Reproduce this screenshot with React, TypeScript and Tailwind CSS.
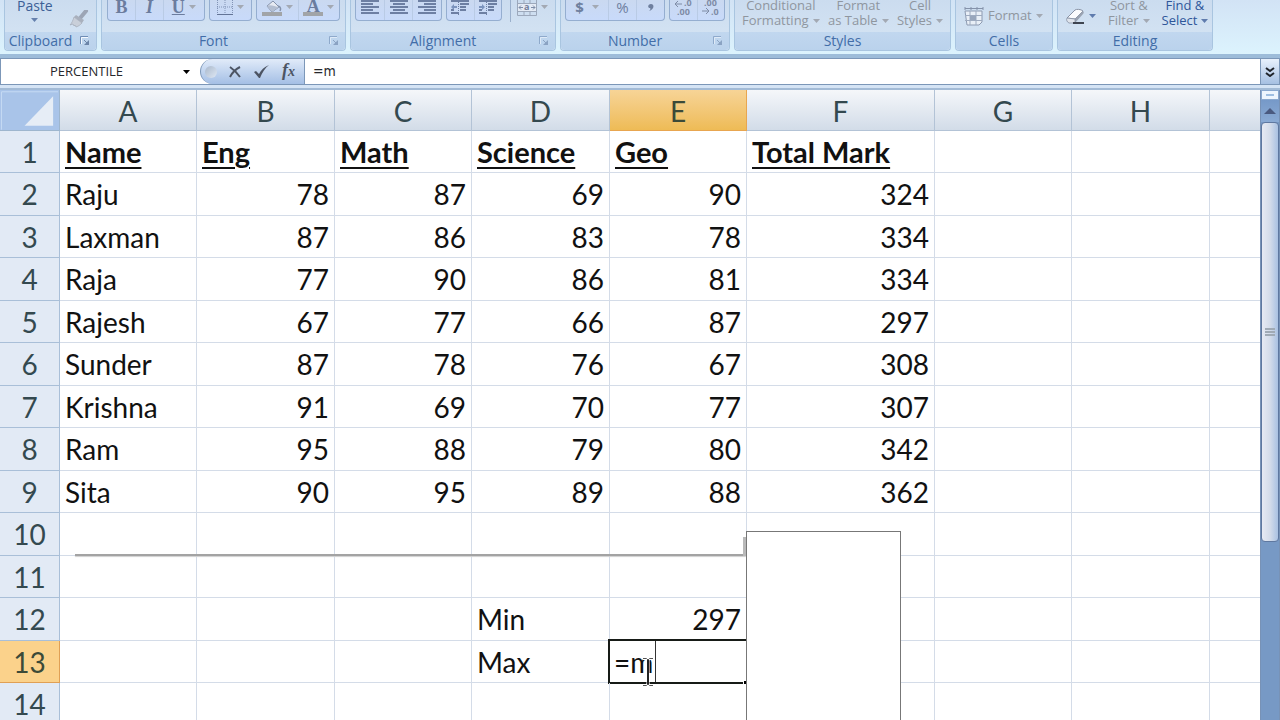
import { useState } from "react";
import type { ReactNode } from "react";

type Align = "left" | "right";

const columns = [
  { id: "A", width: "w-[137px]" },
  { id: "B", width: "w-[138px]" },
  { id: "C", width: "w-[137px]" },
  { id: "D", width: "w-[138px]" },
  { id: "E", width: "w-[137px]" },
  { id: "F", width: "w-[188px]" },
  { id: "G", width: "w-[137px]" },
  { id: "H", width: "w-[138px]" },
];

const rows: string[][] = [
  ["Name", "Eng", "Math", "Science", "Geo", "Total Mark"],
  ["Raju", "78", "87", "69", "90", "324"],
  ["Laxman", "87", "86", "83", "78", "334"],
  ["Raja", "77", "90", "86", "81", "334"],
  ["Rajesh", "67", "77", "66", "87", "297"],
  ["Sunder", "87", "78", "76", "67", "308"],
  ["Krishna", "91", "69", "70", "77", "307"],
  ["Ram", "95", "88", "79", "80", "342"],
  ["Sita", "90", "95", "89", "88", "362"],
  [],
  [],
  ["", "", "", "Min", "297"],
  ["", "", "", "Max", ""],
  [],
];

const ACTIVE_ROW = 12;
const ACTIVE_COL = 4;

function alignOf(value: string): Align {
  return /^\d+$/.test(value) ? "right" : "left";
}

function Caret({ className = "text-[#a3a9b3]" }: { className?: string }) {
  return (
    <svg viewBox="0 0 7 4" className={`inline-block h-1 w-[7px] shrink-0 ${className}`} aria-hidden="true">
      <path d="M0 0h7L3.5 4z" fill="currentColor" />
    </svg>
  );
}

function Launcher({ dim = false }: { dim?: boolean }) {
  return (
    <svg viewBox="0 0 10 10" className={`h-[10px] w-[10px] ${dim ? "opacity-60" : ""}`} aria-hidden="true">
      <path d="M.5 8V.5H8" fill="none" stroke="#6f8db5" />
      <path d="M1.500 8V1.500H8" fill="none" stroke="#f4f9ff" />
      <path d="M4 4l3 3" stroke="#6b84a8" />
      <path d="M9 4v5H4z" fill="#6b84a8" />
    </svg>
  );
}

function Group({
  label,
  className,
  launcher,
  children,
}: {
  label: string;
  className: string;
  launcher?: "on" | "dim";
  children: ReactNode;
}) {
  return (
    <section
      aria-label={label}
      className={`flex shrink-0 flex-col rounded-b border border-t-0 border-[#a9c5e0] bg-gradient-to-b from-[#cbdcef] to-[#d6e5f4] ${className}`}
    >
      <div className="flex h-8 items-start">{children}</div>
      <div className="flex h-[18px] items-center rounded-b bg-gradient-to-b from-[#c1d7ef] to-[#bad2ec] text-[14px] leading-none text-[#426da8]">
        <span className="flex-1 text-center">{label}</span>
        {launcher && (
          <button type="button" aria-label={`${label} options`} className="ml-1 mr-[6px] shrink-0">
            <Launcher dim={launcher === "dim"} />
          </button>
        )}
      </div>
    </section>
  );
}

function ToolSet({ className, children }: { className: string; children: ReactNode }) {
  return (
    <div
      className={`flex h-[21px] items-stretch divide-x divide-[#b9cbe5] rounded-b-sm border border-t-0 border-[#95aed0] bg-gradient-to-b from-[#cad9f0] to-[#c8dafa] ${className}`}
    >
      {children}
    </div>
  );
}

function Tool({
  label,
  className = "flex-1",
  children,
}: {
  label: string;
  className?: string;
  children: ReactNode;
}) {
  return (
    <button type="button" aria-label={label} className={`flex items-start justify-center gap-1 ${className}`}>
      {children}
    </button>
  );
}

function MenuCaret() {
  return (
    <span className="flex h-[14px] items-center">
      <Caret />
    </span>
  );
}

function Lines({ rights, lefts }: { rights: number[]; lefts: number[] }) {
  return (
    <svg viewBox="0 0 18 15" className="h-[15px] w-[18px]" aria-hidden="true">
      {rights.map((right, index) => (
        <path key={index} d={`M${lefts[index]} ${index * 3 + 1}H${right}`} stroke="#6d7fa3" strokeWidth="2" />
      ))}
    </svg>
  );
}

function Indent({ flip = false }: { flip?: boolean }) {
  return (
    <svg viewBox="0 0 20 16" className="h-4 w-5" aria-hidden="true">
      <path d="M1 1h18M10 4h9M10 7h6M1 10h3M10 10h6M1 13h8" stroke="#6d7fa3" strokeWidth="2" />
      <path d="M8.500 2v14" stroke="#6d7fa3" strokeDasharray="1 1" />
      <path d={flip ? "M1 6h3V4l3 3-3 3V8H1z" : "M7 6H4V4L1 7l3 3V8h3z"} fill="#7b93bd" />
    </svg>
  );
}

function TwoLine({
  first,
  second,
  className = "text-[#8f969f]",
  caret,
}: {
  first: string;
  second: string;
  className?: string;
  caret?: string;
}) {
  return (
    <button type="button" className={`flex flex-col items-center text-[13px] leading-[15px] ${className}`}>
      <span>{first}</span>
      <span className="flex items-center gap-1 whitespace-nowrap">
        {second}
        <Caret className={caret} />
      </span>
    </button>
  );
}

function Ribbon() {
  return (
    <header className="flex h-[58px] shrink-0 items-start gap-1 overflow-hidden border-b-4 border-[#9dbcd9] bg-gradient-to-b from-[#d2e3f5] to-[#dcf3fd] pl-1 font-['Open_Sans','Noto_Sans',sans-serif]">
      <Group label="Clipboard" className="w-[93px]" launcher="on">
        <div className="flex h-7 w-full items-end">
          <button type="button" className="ml-3 flex flex-col items-center gap-1 pb-[6px] text-[14px] leading-4 text-[#3c5f96]">
            Paste
            <Caret className="text-[#6580ad]" />
          </button>
          <button type="button" aria-label="Format Painter" className="ml-4">
            <svg viewBox="0 0 20 18" className="h-[18px] w-5" aria-hidden="true">
              <path d="M17 1l-5 6" stroke="#9ca5b5" strokeWidth="4" strokeLinecap="round" />
              <path d="M7 5l8 5-2 3-8-6z" fill="#a9b0bd" />
              <path d="M5 7l8 6c-2 2-3 3-6 4l-1-2-1 1-1-2-3 1C3 13 4 10 5 7z" fill="#c9cfd9" stroke="#a3abb8" strokeWidth=".7" />
            </svg>
          </button>
        </div>
      </Group>

      <Group label="Font" className="w-[245px]" launcher="dim">
        <div className="flex w-full gap-1 px-[5px] font-['Liberation_Serif',serif] text-[18px] leading-[15px] text-[#6b7c9e]">
          <ToolSet className="w-[98px]">
            <Tool label="Bold" className="w-7"><b>B</b></Tool>
            <Tool label="Italic" className="w-7"><i className="font-bold">I</i></Tool>
            <Tool label="Underline" className="flex-1">
              <span className="font-bold underline">U</span>
              <MenuCaret />
            </Tool>
          </ToolSet>
          <ToolSet className="w-[44px]">
            <Tool label="Borders">
              <svg viewBox="0 0 16 15" className="h-[15px] w-4" aria-hidden="true">
                <path d="M.5 0v14M8 0v14M15.500 0v14M0 7h16" stroke="#8193b5" strokeDasharray="1 1" />
                <path d="M0 14.500h16" stroke="#637496" />
              </svg>
              <MenuCaret />
            </Tool>
          </ToolSet>
          <ToolSet className="w-[84px]">
            <Tool label="Fill Color">
              <svg viewBox="0 0 20 17" className="h-[17px] w-5" aria-hidden="true">
                <path d="M5 6l6-5 6 6-7 5z" fill="#e6eaf2" stroke="#8492ab" />
                <path d="M5 6c3-2 8 1 12 1l-7 5z" fill="#b3bed1" />
                <path d="M16 6c3 1 3 3 2 5" fill="none" stroke="#8492ab" strokeWidth="1.500" />
                <path d="M0 12h20v4H0z" fill="#a1a4a8" />
              </svg>
              <MenuCaret />
            </Tool>
            <Tool label="Font Color">
              <span className="flex w-5 flex-col items-center border-b-4 border-[#a1a4a8] font-bold leading-3">A</span>
              <MenuCaret />
            </Tool>
          </ToolSet>
        </div>
      </Group>

      <Group label="Alignment" className="w-[206px]" launcher="dim">
        <div className="flex w-full gap-1 px-1">
          <ToolSet className="w-[87px]">
            <Tool label="Align Left"><Lines lefts={[0, 0, 0, 0, 0]} rights={[18, 12, 18, 12, 18]} /></Tool>
            <Tool label="Center"><Lines lefts={[0, 3, 0, 3, 0]} rights={[18, 15, 18, 15, 18]} /></Tool>
            <Tool label="Align Right"><Lines lefts={[0, 6, 0, 6, 0]} rights={[18, 18, 18, 18, 18]} /></Tool>
          </ToolSet>
          <ToolSet className="w-[56px]">
            <Tool label="Decrease Indent"><Indent /></Tool>
            <Tool label="Increase Indent"><Indent flip /></Tool>
          </ToolSet>
          <div className="ml-1 flex h-[22px] flex-1 border-l border-[#9bb0cc]">
            <Tool label="Merge and Center" className="ml-[6px]">
              <svg viewBox="0 0 20 16" className="h-4 w-5" aria-hidden="true">
                <path d="M.5 0v15.500h19V0M0 3.500h20M0 11.500h20M7 0v3.500M13 0v3.500M7 11.500v4M13 11.500v4" fill="none" stroke="#9ca8bb" />
                <path d="M1 4h18v7H1z" fill="#e4ebf5" />
                <path d="M2 7.500h4M14 7.500h4M4 5.500l-2 2 2 2M16 5.500l2 2-2 2" fill="none" stroke="#7e8da8" />
                <text x="7" y="10" fontSize="9" fontWeight="bold" fill="#72809b">a</text>
              </svg>
              <MenuCaret />
            </Tool>
          </div>
        </div>
      </Group>

      <Group label="Number" className="w-[170px]" launcher="dim">
        <div className="flex w-full gap-1 px-1 text-[15px] leading-[15px] text-[#6f809f]">
          <ToolSet className="w-[100px]">
            <Tool label="Accounting Format" className="w-[43px]">
              <b>$</b>
              <span className="ml-1"><MenuCaret /></span>
            </Tool>
            <Tool label="Percent Style">%</Tool>
            <Tool label="Comma Style">
              <svg viewBox="0 0 6 14" className="h-[14px] w-[6px]" aria-hidden="true">
                <path d="M3 4c4 0 3 6-2 7 1-1 2-2 1-3C-1 8 0 4 3 4z" fill="#6f809f" />
              </svg>
            </Tool>
          </ToolSet>
          <ToolSet className="w-[56px]">
            <Tool label="Increase Decimal">
              <svg viewBox="0 0 19 16" className="h-4 w-[19px]" fontSize="9" fontWeight="bold" fill="#7f8ca6" aria-hidden="true">
                <path d="M1 4h7M4 1L1 4l3 3" fill="none" stroke="#7f8ca6" />
                <text x="10" y="6">.0</text>
                <text x="3" y="15">.00</text>
              </svg>
            </Tool>
            <Tool label="Decrease Decimal">
              <svg viewBox="0 0 19 16" className="h-4 w-[19px]" fontSize="9" fontWeight="bold" fill="#7f8ca6" aria-hidden="true">
                <text x="3" y="6">.00</text>
                <path d="M1 11h7M5 8l3 3-3 3" fill="none" stroke="#7f8ca6" />
                <text x="10" y="15">.0</text>
              </svg>
            </Tool>
          </ToolSet>
        </div>
      </Group>

      <Group label="Styles" className="w-[217px]">
        <div className="flex h-7 w-full items-end justify-between px-[7px]">
          <TwoLine first="Conditional" second="Formatting" />
          <TwoLine first="Format" second="as Table" />
          <TwoLine first="Cell" second="Styles" />
        </div>
      </Group>

      <Group label="Cells" className="w-[98px]">
        <button type="button" className="flex h-8 w-full items-center gap-1 px-2 text-[13px] text-[#8f969f]">
          <svg viewBox="0 0 20 20" className="h-5 w-5 shrink-0" aria-hidden="true">
            <path d="M1 1v3M7 1v3M13 1v3M19 1v3M1 2.500h18" stroke="#8492aa" />
            <path d="M1 5h17v11l-3 3H3z" fill="#e9eff7" stroke="#8d9ab1" />
            <path d="M6 5v14M12 5v14M1 9.500h17M1 14.500h17" stroke="#9eabc0" />
            <path d="M6 10h6v4H6z" fill="#98a6bc" />
          </svg>
          Format
          <Caret />
        </button>
      </Group>

      <Group label="Editing" className="w-[156px]">
        <div className="flex h-7 w-full items-end gap-3 pl-2">
          <button type="button" aria-label="Clear" className="flex items-center gap-1 pb-1">
            <svg viewBox="0 0 19 16" className="h-4 w-[19px]" aria-hidden="true">
              <path d="M1 10l8-8c1-1 6-1 8 1l-8 8z" fill="#fbfcfe" stroke="#8892a5" />
              <path d="M9 11l8-8c1 1 1 2 0 3l-8 9z" fill="#9aa3b2" />
              <path d="M1 10l8 1v4H3c-2-1-3-3-2-5z" fill="#dfe4ec" stroke="#8892a5" strokeWidth=".8" />
              <path d="M7 15h11" stroke="#3e4450" strokeWidth="2" />
            </svg>
            <Caret className="text-[#5f7bad]" />
          </button>
          <TwoLine first="Sort &" second="Filter" />
          <TwoLine first="Find &" second="Select" className="text-[#2f569a]" caret="text-[#5f7bad]" />
        </div>
      </Group>
    </header>
  );
}

function FormulaBar({ value, onChange }: { value: string; onChange: (value: string) => void }) {
  return (
    <div className="flex h-[27px] shrink-0 items-stretch border-y border-[#7c97b8] bg-white font-['DejaVu_Sans_Condensed','DejaVu_Sans',sans-serif] text-[13px] text-[#26282c]">
      <div className="flex w-[200px] shrink-0 border-l border-[#7c97b8]">
        <input
          aria-label="Name Box"
          defaultValue="PERCENTILE"
          className="min-w-0 flex-1 text-center font-['Open_Sans','Noto_Sans',sans-serif] outline-none"
        />
        <button type="button" aria-label="Name list" className="flex w-7 items-center justify-center">
          <Caret className="text-black" />
        </button>
      </div>
      <div className="flex w-[105px] shrink-0 items-center gap-3 rounded-l-full border border-y-0 border-[#7c97b8] bg-gradient-to-b from-[#e1ebf9] to-[#a4bfe5] pl-1">
        <span className="h-3 w-3 rounded-full bg-gradient-to-br from-[#a9b8cb] to-[#dfe8f4]" />
        <button type="button" aria-label="Cancel">
          <svg viewBox="0 0 12 12" className="h-3 w-3" aria-hidden="true">
            <path d="M1 1c3 2 7 6 10 10M11 1C7 3 3 7 1 11" fill="none" stroke="#4c5463" strokeWidth="2" />
          </svg>
        </button>
        <button type="button" aria-label="Enter">
          <svg viewBox="0 0 17 13" className="h-[13px] w-[17px]" aria-hidden="true">
            <path d="M1 7l2-1 3 3C8 5 11 2 16 0c-4 3-7 8-9 13H6z" fill="#4c5463" />
          </svg>
        </button>
        <button type="button" aria-label="Insert Function" className="-mt-1 font-['Liberation_Serif',serif] text-[18px] font-bold italic leading-none text-[#4c5463]">
          f<span className="text-[14px]">x</span>
        </button>
      </div>
      <input
        aria-label="Formula"
        value={value}
        onChange={(event) => onChange(event.target.value)}
        className="min-w-0 flex-1 pl-2 text-[14px] outline-none"
      />
      <button
        type="button"
        aria-label="Expand formula bar"
        className="flex w-5 shrink-0 items-center justify-center border-x border-[#7c97b8] bg-gradient-to-b from-[#e8f1fc] to-[#a6c0e2]"
      >
        <svg viewBox="0 0 10 10" className="h-[10px] w-[10px]" aria-hidden="true">
          <path d="M1 1l4 3 4-3M1 6l4 3 4-3" fill="none" stroke="#20242b" strokeWidth="2" />
        </svg>
      </button>
    </div>
  );
}

function ActiveCell({ value, onChange }: { value: string; onChange: (value: string) => void }) {
  return (
    <>
      <div className="absolute -inset-[2px] flex border-2 border-[#171b17] bg-white">
        <input
          aria-label="Cell E13"
          value={value}
          onChange={(event) => onChange(event.target.value)}
          className="w-full pl-1 outline-none"
        />
        <span className="absolute inset-y-0 left-[45px] w-px bg-[#333]" />
        <span className="absolute -bottom-[3px] -right-[2px] h-[5px] w-[5px] border border-white bg-black" />
      </div>
      <svg viewBox="0 0 12 30" className="absolute left-[32px] top-4 h-[30px] w-3" aria-hidden="true">
        <path d="M1 1.500h3.500L6 3l1.500-1.500H11M6 3v24M1 28.500h3.500L6 27l1.500 1.500H11" fill="none" stroke="#fff" strokeWidth="3" />
        <path d="M1 1.500h3.500L6 3l1.500-1.500H11M1 28.500h3.500L6 27l1.500 1.500H11" fill="none" stroke="#555" />
        <path d="M6 3v24" stroke="#222" strokeWidth="2" />
      </svg>
    </>
  );
}

function Sheet({ value, onChange }: { value: string; onChange: (value: string) => void }) {
  return (
    <div className="relative min-w-0 flex-1 overflow-hidden bg-white">
      <table className="w-full table-fixed border-separate border-spacing-0 font-['Lato',sans-serif] text-[28px] leading-9 text-[#111]">
        <colgroup>
          <col className="w-[60px]" />
          {columns.map((column) => (
            <col key={column.id} className={column.width} />
          ))}
          <col />
        </colgroup>
        <thead>
          <tr className="h-[41px]">
            <th aria-label="Select all" className="border-b border-r border-[#9eb6ce] bg-[#a9c4e9] p-0">
              <svg viewBox="0 0 60 40" className="block h-10 w-full" aria-hidden="true">
                <path d="M54 6v30H25z" fill="#e6edf6" />
                <path d="M1.500 40V1.500H59" fill="none" stroke="#c6daf4" />
              </svg>
            </th>
            {columns.map((column, index) => (
              <th
                key={column.id}
                scope="col"
                className={`border-b border-r bg-gradient-to-b px-0 pb-0 pt-[2px] font-normal ${
                  index === ACTIVE_COL
                    ? "border-[#e8a650] from-[#f7d496] to-[#eebb55] text-[#3c4a38]"
                    : "border-[#b3c3d6] from-[#f5f7fa] to-[#d2dce8] text-[#34494f]"
                }`}
              >
                {column.id}
              </th>
            ))}
            <th aria-label="Next column" className="border-b border-[#b3c3d6] bg-gradient-to-b from-[#f5f7fa] to-[#d2dce8] p-0" />
          </tr>
        </thead>
        <tbody>
          {rows.map((row, rowIndex) => (
            <tr key={rowIndex} className="odd:h-[42px] even:h-[43px]">
              <th
                scope="row"
                className={`border-b border-r p-0 font-normal ${
                  rowIndex === ACTIVE_ROW
                    ? "border-[#e0a055] bg-[#fbd28b] text-[#3c4a38]"
                    : "border-[#a9bfd8] bg-[#e2eaf5] text-[#34494f]"
                }`}
              >
                {rowIndex + 1}
              </th>
              {columns.map((column, colIndex) => {
                const text = row[colIndex] ?? "";
                const isActive = rowIndex === ACTIVE_ROW && colIndex === ACTIVE_COL;

                return (
                  <td
                    key={column.id}
                    className={`relative whitespace-nowrap border-b border-r border-[#d4dce8] px-[5px] py-0 ${
                      alignOf(text) === "right" ? "text-right" : "text-left"
                    } ${rowIndex === 0 ? "text-[29px] font-bold underline decoration-2 underline-offset-4" : ""}`}
                  >
                    {isActive ? <ActiveCell value={value} onChange={onChange} /> : text}
                  </td>
                );
              })}
              <td className="border-b border-[#d4dce8] p-0" />
            </tr>
          ))}
        </tbody>
      </table>

      {/* leftover shadow of the function list, then the list itself */}
      <div className="absolute left-[75px] top-[464px] h-[2px] w-[671px] bg-[#a3a3a3] shadow-[0_1px_1px_#d0d0d0]" />
      <div className="absolute left-[743px] top-[447px] h-[19px] w-[3px] bg-[#b9b9b9]" />
      <div className="absolute bottom-0 left-[746px] top-[441px] w-[155px] border border-b-0 border-[#777] bg-white" />
    </div>
  );
}

function ScrollBar() {
  return (
    <div className="flex w-5 shrink-0 flex-col border-x border-[#7892b6] bg-[#7799c5]">
      <div className="flex h-[10px] items-center justify-center border border-[#8aa9cf] bg-[#eef6fe]">
        <span className="h-[2px] w-2 bg-[#9fbfe2]" />
      </div>
      <button type="button" aria-label="Scroll up" className="flex h-[22px] items-center justify-center bg-gradient-to-b from-[#7699c8] to-[#8aaad4]">
        <svg viewBox="0 0 12 6" className="h-[6px] w-3" aria-hidden="true">
          <path d="M6 0l6 6H0z" fill="#4a5a80" />
        </svg>
      </button>
      <button
        type="button"
        aria-label="Scroll position"
        className="flex h-[420px] shrink-0 flex-col items-center justify-center gap-px rounded-sm border border-[#5f78a0] bg-gradient-to-r from-[#e7eaf3] via-[#d4dcea] to-[#a9c1e2]"
      >
        <span className="h-[2px] w-[10px] bg-[#a0aab5]" />
        <span className="h-[2px] w-[10px] bg-[#a0aab5]" />
        <span className="h-[2px] w-[10px] bg-[#a0aab5]" />
      </button>
    </div>
  );
}

export default function App() {
  const [formula, setFormula] = useState("=m");

  return (
    <main className="flex h-screen flex-col overflow-hidden bg-[#d5e4f5]">
      <Ribbon />
      <FormulaBar value={formula} onChange={setFormula} />
      <div className="mt-[3px] flex min-h-0 flex-1 border-t-2 border-[#a3bbd6]">
        <Sheet value={formula} onChange={setFormula} />
        <ScrollBar />
      </div>
    </main>
  );
}
